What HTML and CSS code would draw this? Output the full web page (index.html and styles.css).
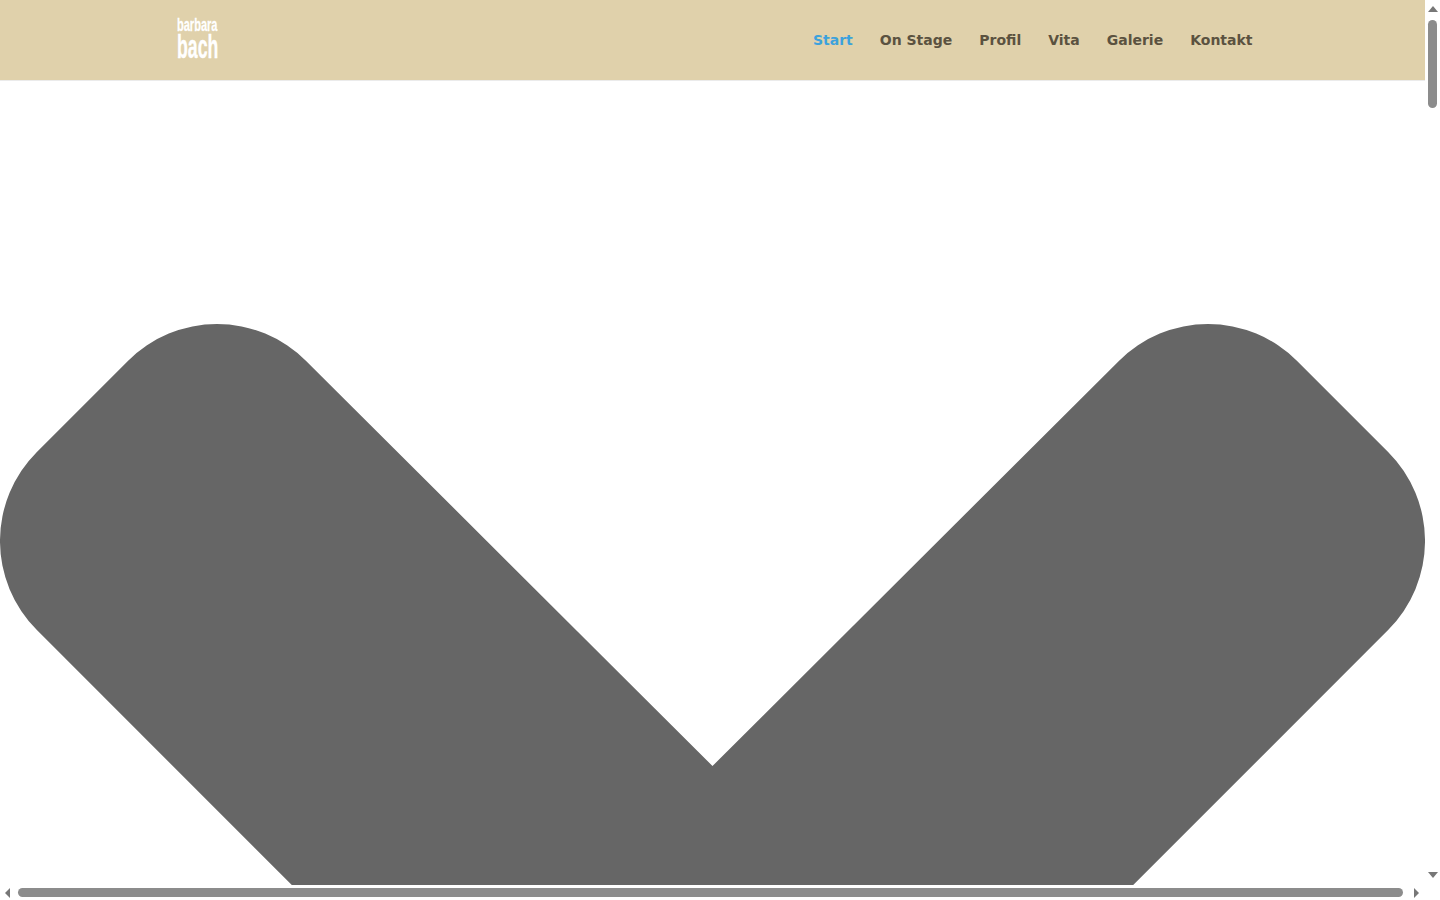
FILE: index.html
```html
<!DOCTYPE html>
<html lang="de">
<head>
    <meta charset="UTF-8">
    <meta name="viewport" content="width=device-width, initial-scale=1.0">
    <title>Barbara Bach</title>
    <link rel="stylesheet" href="styles.css">
</head>
<body>
    <div class="window">
        <div class="page">
            <header class="header">
                <a class="logo" href="#">
                    <span class="logo-top">barbara</span>
                    <span class="logo-main">bach</span>
                </a>
                <nav class="nav">
                    <a class="active" href="#">Start</a>
                    <a href="#">On Stage</a>
                    <a href="#">Profil</a>
                    <a href="#">Vita</a>
                    <a href="#">Galerie</a>
                    <a href="#">Kontakt</a>
                </nav>
            </header>
            <!-- big chevron, runs below the fold -->
            <svg class="chevron" viewBox="0 0 1425 1425" aria-hidden="true">
                <path d="M712.5 686L306.1 280.9A126 126 0 0 0 127.9 280.9L36.9 371.9A126 126 0 0 0 36.9 550.1L652.5 1165.7Q712.5 1225.7 772.5 1165.7L1388.1 550.1A126 126 0 0 0 1388.1 371.9L1297.1 280.9A126 126 0 0 0 1118.9 280.9Z"/>
            </svg>
        </div>
        <div class="scroll-v">
            <span class="arrow arrow-up"></span>
            <span class="thumb-v"></span>
            <span class="arrow arrow-down"></span>
        </div>
        <div class="scroll-h">
            <span class="arrow arrow-left"></span>
            <span class="thumb-h"></span>
            <span class="arrow arrow-right"></span>
        </div>
        <div class="corner"></div>
    </div>
</body>
</html>
```

FILE: styles.css
```css
html, body {
    margin: 0;
    height: 100%;
    overflow: hidden;
    background: #fff;
}
.window {
    display: grid;
    grid-template-columns: 1425px 15px;
    grid-template-rows: 885px 15px;
    height: 900px;
}
.page {
    overflow: hidden;
}
.header {
    display: flex;
    align-items: center;
    justify-content: space-between;
    box-sizing: border-box;
    height: 80px;
    padding: 0 172.5px 0 177px;
    background: #e0d1ab;
    box-shadow: 0 1px 0 rgba(0, 0, 0, 0.08);
}
.logo {
    display: flex;
    flex-direction: column;
    width: 41px;
    margin-top: -4px;
    color: #fff;
    font-family: "Liberation Sans", Arial, sans-serif;
    font-weight: bold;
    text-decoration: none;
}
.logo-top {
    font-size: 19px;
    line-height: 16px;
    white-space: nowrap;
    transform: scaleX(0.58);
    transform-origin: left center;
    -webkit-text-stroke: 0.3px #fff;
}
.logo-main {
    font-size: 34px;
    line-height: 26px;
    white-space: nowrap;
    transform: scaleX(0.52);
    transform-origin: left center;
    -webkit-text-stroke: 0.4px #fff;
}
.nav {
    display: flex;
    gap: 27px;
    font-family: "DejaVu Sans", sans-serif;
    font-size: 14px;
    font-weight: bold;
}
.nav a {
    color: #5b5240;
    text-decoration: none;
}
.nav a.active {
    color: #3ca2dc;
}
.chevron {
    display: block;
    width: 1425px;
    height: 1425px;
    fill: #666;
}
.scroll-v, .scroll-h, .corner {
    background: #fff;
}
.scroll-v {
    display: flex;
    flex-direction: column;
    align-items: center;
    padding: 6px 0 7px;
}
.scroll-h {
    display: flex;
    align-items: center;
    padding: 0 6px 0 5px;
}
.thumb-v {
    width: 9px;
    height: 88px;
    margin-top: 8px;
    margin-bottom: auto;
    border-radius: 5px;
    background: #8c8c8c;
}
.thumb-h {
    flex: 1;
    height: 9px;
    margin: 0 11px 0 8px;
    border-radius: 5px;
    background: #8c8c8c;
}
.arrow {
    width: 0;
    height: 0;
    border-style: solid;
    border-color: transparent;
}
.arrow-up {
    border-width: 0 5px 6px;
    border-bottom-color: #777;
}
.arrow-down {
    border-width: 6px 5px 0;
    border-top-color: #777;
}
.arrow-left {
    border-width: 5px 5px 5px 0;
    border-right-color: #777;
}
.arrow-right {
    border-width: 5px 0 5px 5px;
    border-left-color: #777;
}
```
